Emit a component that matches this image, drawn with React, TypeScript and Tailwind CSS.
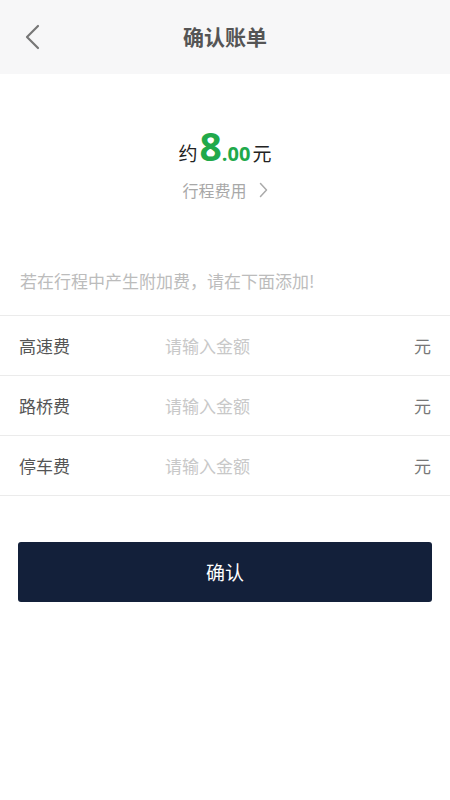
import React from "react";

const font = { fontFamily: '"Noto Sans CJK SC", "Noto Sans", sans-serif' };

function Row({ label }: { label: string }) {
  return (
    <div className="flex items-center h-[60px] border-b border-[#ebebeb] px-[19px]">
      <div className="w-[146px] text-[17px] text-[#555] leading-none">{label}</div>
      <input
        className="flex-1 text-[17px] text-[#333] placeholder-[#c8c8c8] outline-none bg-transparent leading-none"
        placeholder="请输入金额"
        style={font}
      />
      <div className="text-[17px] text-[#777] leading-none">元</div>
    </div>
  );
}

export default function App() {
  return (
    <div className="w-[450px] h-[800px] bg-white flex flex-col" style={font}>
      <div className="h-[74px] bg-[#f7f7f8] flex items-center relative">
        <div className="pl-[24px]">
          <svg width="16" height="26" viewBox="0 0 16 26">
            <path d="M14 2 L3 13 L14 24" fill="none" stroke="#777" strokeWidth="2.2" strokeLinecap="round" strokeLinejoin="round" />
          </svg>
        </div>
        <div className="absolute inset-0 flex items-center justify-center text-[21px] font-bold text-[#555]">确认账单</div>
      </div>
      <div className="flex flex-col items-center pt-[52px]">
        <div className="flex items-baseline leading-none">
          <span className="text-[19px] text-[#222]">约</span>
          <span className="text-[39px] font-bold text-[#21a94a] ml-[2px]" style={{ fontFamily: '"Open Sans", "Noto Sans", sans-serif' }}>8</span>
          <span className="text-[20px] font-bold text-[#21a94a]" style={{ fontFamily: '"Open Sans", "Noto Sans", sans-serif' }}>.00</span>
          <span className="text-[19px] text-[#222] ml-[2px]">元</span>
        </div>
        <div className="flex items-center mt-[17px] text-[16px] text-[#a8a8a8] leading-none">
          <span>行程费用</span>
          <svg className="ml-[12px]" width="9" height="16" viewBox="0 0 9 16">
            <path d="M1.5 1.5 L7.5 8 L1.5 14.5" fill="none" stroke="#aaa" strokeWidth="1.5" strokeLinecap="round" strokeLinejoin="round" />
          </svg>
        </div>
      </div>
      <div className="mt-[74px] px-[20px] text-[17px] text-[#bcbcbc] leading-none">若在行程中产生附加费，请在下面添加!</div>
      <div className="mt-[26px] border-t border-[#ebebeb]">
        <Row label="高速费" />
        <Row label="路桥费" />
        <Row label="停车费" />
      </div>
      <div className="px-[18px] mt-[46px]">
        <button className="w-full h-[60px] bg-[#13203a] rounded-[3px] text-white text-[19px]" style={font}>确认</button>
      </div>
    </div>
  );
}
